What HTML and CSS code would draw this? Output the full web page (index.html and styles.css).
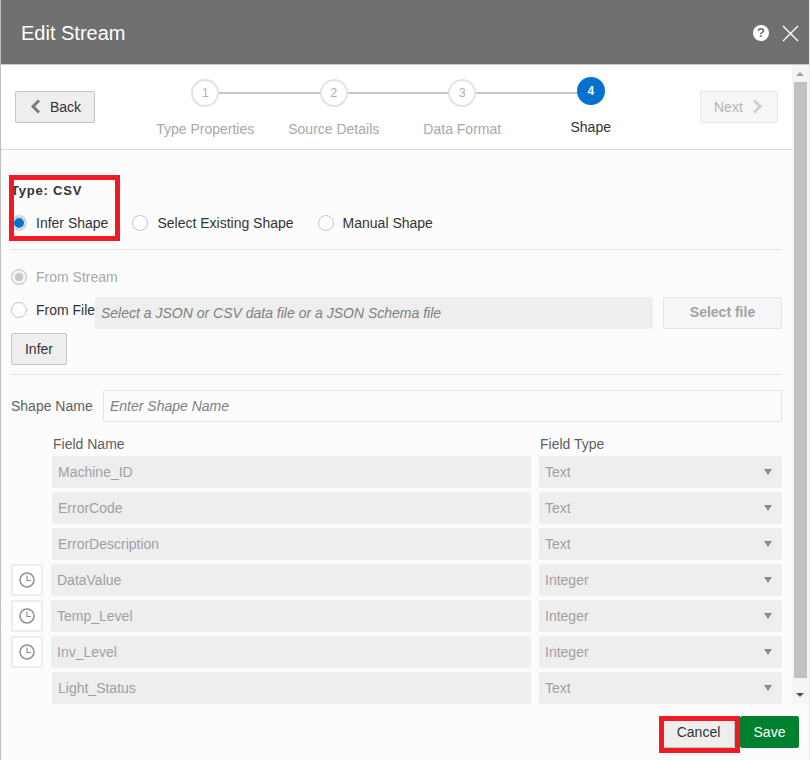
FILE: index.html
```html
<!DOCTYPE html>
<html lang="en">
<head>
  <meta charset="UTF-8">
  <meta name="viewport" content="width=device-width, initial-scale=1.0">
  <title>Edit Stream</title>
  <link rel="stylesheet" href="styles.css">
</head>
<body>
  <div class="dialog">
    <header class="dialog-head">
      <h1 class="dialog-title">Edit Stream</h1>
      <span class="help-icon">?</span>
      <svg class="close-icon" width="17" height="17" viewBox="0 0 17 17"><path d="M1 1 L16 16 M16 1 L1 16" fill="none" stroke="#fff" stroke-width="1.4"/></svg>
    </header>

    <div class="dialog-body">
      <div class="pane">
        <div class="train-bar">
          <button class="btn btn-back" type="button">
            <svg class="chevron" width="11" height="15" viewBox="0 0 11 15"><path d="M9 1.5 L3 7.5 L9 13.5" fill="none" stroke="#7d7d7d" stroke-width="3"/></svg>
            Back
          </button>
          <ol class="train">
            <li class="step"><span class="step-num">1</span><span class="step-label">Type Properties</span></li>
            <li class="step"><span class="step-num">2</span><span class="step-label">Source Details</span></li>
            <li class="step"><span class="step-num">3</span><span class="step-label">Data Format</span></li>
            <li class="step step-active"><span class="step-num">4</span><span class="step-label">Shape</span></li>
          </ol>
          <button class="btn btn-next" type="button">
            Next
            <svg class="chevron" width="11" height="15" viewBox="0 0 11 15"><path d="M2 1.5 L8 7.5 L2 13.5" fill="none" stroke="#cfcfcf" stroke-width="3"/></svg>
          </button>
        </div>

        <div class="content">
          <div class="type-line">Type: CSV</div>
          <div class="radio-row">
            <label class="radio-item"><span class="radio radio-on"></span>Infer Shape</label>
            <label class="radio-item"><span class="radio"></span>Select Existing Shape</label>
            <label class="radio-item"><span class="radio"></span>Manual Shape</label>
          </div>
          <hr class="divider divider-first">

          <label class="radio-item from-stream"><span class="radio radio-disabled"></span>From Stream</label>
          <div class="file-row">
            <label class="radio-item from-file"><span class="radio"></span>From File</label>
            <input class="file-input" type="text" disabled placeholder="Select a JSON or CSV data file or a JSON Schema file">
            <button class="btn btn-select" type="button">Select file</button>
          </div>
          <button class="btn btn-infer" type="button">Infer</button>
          <hr class="divider divider-second">

          <div class="shape-name">
            <label for="shapeName">Shape Name</label>
            <input id="shapeName" type="text" placeholder="Enter Shape Name">
          </div>

          <div class="field-head">
            <span class="field-head-name">Field Name</span>
            <span class="field-head-type">Field Type</span>
          </div>

          <div class="field-row no-time">
            <input class="field-input" type="text" disabled value="Machine_ID">
            <div class="field-select">Text<span class="caret"></span></div>
          </div>
          <div class="field-row no-time">
            <input class="field-input" type="text" disabled value="ErrorCode">
            <div class="field-select">Text<span class="caret"></span></div>
          </div>
          <div class="field-row no-time">
            <input class="field-input" type="text" disabled value="ErrorDescription">
            <div class="field-select">Text<span class="caret"></span></div>
          </div>
          <div class="field-row">
            <span class="time-btn"><svg width="16" height="16" viewBox="0 0 16 16"><circle cx="8" cy="8" r="7" fill="none" stroke="#8b8f91" stroke-width="1.5"/><path d="M8 3.5 V8.5 H12" fill="none" stroke="#8b8f91" stroke-width="1.2"/></svg></span>
            <input class="field-input" type="text" disabled value="DataValue">
            <div class="field-select">Integer<span class="caret"></span></div>
          </div>
          <div class="field-row">
            <span class="time-btn"><svg width="16" height="16" viewBox="0 0 16 16"><circle cx="8" cy="8" r="7" fill="none" stroke="#8b8f91" stroke-width="1.5"/><path d="M8 3.5 V8.5 H12" fill="none" stroke="#8b8f91" stroke-width="1.2"/></svg></span>
            <input class="field-input" type="text" disabled value="Temp_Level">
            <div class="field-select">Integer<span class="caret"></span></div>
          </div>
          <div class="field-row">
            <span class="time-btn"><svg width="16" height="16" viewBox="0 0 16 16"><circle cx="8" cy="8" r="7" fill="none" stroke="#8b8f91" stroke-width="1.5"/><path d="M8 3.5 V8.5 H12" fill="none" stroke="#8b8f91" stroke-width="1.2"/></svg></span>
            <input class="field-input" type="text" disabled value="Inv_Level">
            <div class="field-select">Integer<span class="caret"></span></div>
          </div>
          <div class="field-row no-time">
            <input class="field-input" type="text" disabled value="Light_Status">
            <div class="field-select">Text<span class="caret"></span></div>
          </div>
        </div>
      </div>

      <div class="scrollbar">
        <span class="arrow-up"></span>
        <span class="thumb"></span>
        <span class="arrow-down"></span>
      </div>
    </div>

    <footer class="dialog-foot">
      <button class="btn btn-cancel" type="button">Cancel</button>
      <button class="btn btn-save" type="button">Save</button>
    </footer>

    <!-- red annotation boxes drawn over the screenshot -->
    <div class="callout callout-type"></div>
    <div class="callout callout-cancel"></div>
  </div>
</body>
</html>
```

FILE: styles.css
```css
* {
  box-sizing: border-box;
}

body {
  margin: 0;
  background-color: #fff;
  font-family: "Liberation Sans", Arial, sans-serif;
  font-size: 14px;
  color: #333;
}

.dialog {
  position: relative;
  display: flex;
  flex-direction: column;
  width: 810px;
  height: 760px;
  overflow: hidden;
  border-left: 1px solid #bdbdbd;
  border-right: 1px solid #e8e8e8;
  background-color: #fcfcfc;
}

.dialog-head {
  display: flex;
  align-items: center;
  height: 65px;
  flex-shrink: 0;
  padding: 2px 10px 0 20px;
  background-color: #707070;
  border-bottom: 1px solid #c8c8c8;
  color: #fff;
}

.dialog-title {
  margin: 0;
  flex: 1;
  font-size: 20px;
  font-weight: 400;
}

.help-icon {
  width: 16px;
  height: 16px;
  margin-right: 13px;
  border-radius: 50%;
  background-color: #fff;
  color: #707070;
  font-size: 13px;
  font-weight: 700;
  line-height: 16px;
  text-align: center;
}

.dialog-body {
  display: flex;
  height: 639px;
  flex-shrink: 0;
}

.pane {
  width: 791px;
}

/* step train */
.train-bar {
  display: flex;
  height: 85px;
  padding: 26px 14px 0;
  background-color: #fff;
  border-bottom: 1px solid #d6dfe6;
}

.btn {
  height: 32px;
  padding: 0;
  border: 1px solid #c4c4c4;
  border-radius: 2px;
  background-color: #eee;
  font-family: inherit;
  font-size: 14px;
  color: #333;
}

.chevron {
  margin-bottom: 2px;
}

.btn-back {
  display: flex;
  align-items: center;
  width: 80px;
  padding-left: 14px;
  gap: 9px;
}

.btn-next {
  display: flex;
  align-items: center;
  width: 78px;
  margin-left: 45px;
  padding-left: 13px;
  gap: 9px;
  background-color: #f6f6f6;
  border-color: #e6e6e6;
  color: #b4b4b4;
}

.train {
  display: flex;
  width: 514px;
  margin: -12px 0 0 46px;
  padding: 0;
  list-style: none;
}

.step {
  position: relative;
  display: flex;
  flex-direction: column;
  align-items: center;
  width: 128.5px;
}

.step + .step::before {
  content: "";
  position: absolute;
  top: 13px;
  left: -50%;
  width: 100%;
  height: 2px;
  background-color: #c6c6c6;
}

.step-num {
  position: relative;
  z-index: 1;
  width: 28px;
  height: 28px;
  border: 2px solid #e3e3e3;
  border-radius: 50%;
  background-color: #fff;
  color: #b0b0b0;
  font-size: 12px;
  line-height: 24px;
  text-align: center;
}

.step-label {
  margin-top: 14px;
  color: #a8a8a8;
  white-space: nowrap;
}

.step-active .step-num {
  margin-top: -2px;
  border-color: #0572ce;
  background-color: #0572ce;
  color: #fff;
  font-weight: 700;
}

.step-active .step-label {
  color: #333;
}

/* form */
.content {
  padding: 33px 10px 0;
}

.type-line {
  height: 16px;
  font-size: 13px;
  font-weight: 700;
  line-height: 16px;
  letter-spacing: 0.8px;
}

.radio-row {
  display: flex;
  gap: 24px;
  margin-top: 14px;
}

.radio-item {
  display: flex;
  align-items: center;
  gap: 9px;
  height: 20px;
  white-space: nowrap;
}

.radio {
  width: 16px;
  height: 16px;
  flex-shrink: 0;
  border: 1px solid #c6c6c6;
  border-radius: 50%;
  background-color: #fff;
}

.radio-on {
  border: 2px solid #d6d6d6;
  background-color: #0572ce;
  box-shadow: inset 0 0 0 1px #fff;
}

.radio-disabled {
  border: 1px solid #c6c6c6;
  background-color: #c6c6c6;
  box-shadow: inset 0 0 0 3px #f4f4f4;
}

.divider {
  height: 1px;
  margin: 0;
  border: 0;
  background-color: #e4e4e4;
}

.divider-first {
  margin-top: 16px;
}

.divider-second {
  margin-top: 9px;
}

.from-stream {
  margin-top: 17px;
  color: #a8a8a8;
}

.file-row {
  display: flex;
  height: 32px;
  margin-top: 10px;
}

.from-file {
  width: 84px;
  height: 26px;
  flex-shrink: 0;
  color: #333;
}

.file-input {
  width: 558px;
  height: 32px;
  padding: 0 6px;
  border: 0;
  border-radius: 2px;
  background-color: #eee;
  font-family: inherit;
  font-size: 14px;
}

.file-input::placeholder,
#shapeName::placeholder {
  color: #7f7f7f;
  font-style: italic;
  opacity: 1;
}

.btn-select {
  width: 119px;
  margin-left: 10px;
  padding-bottom: 2px;
  border-color: #e0e5ea;
  background-color: #f5f6f8;
  color: #a3a3a3;
  font-weight: 700;
}

.btn-infer {
  display: block;
  width: 56px;
  margin-top: 4px;
}

.shape-name {
  display: flex;
  align-items: center;
  height: 32px;
  margin-top: 15px;
}

.shape-name label {
  width: 92px;
  color: #5f5f5f;
}

#shapeName {
  flex: 1;
  height: 32px;
  padding: 0 6px;
  border: 1px solid #e4e4e4;
  border-radius: 2px;
  background-color: #fcfcfc;
  font-family: inherit;
  font-size: 14px;
}

.field-head {
  display: flex;
  height: 14px;
  margin-top: 15px;
  margin-bottom: 5px;
  padding-left: 42px;
  color: #5f5f5f;
  line-height: 14px;
}

.field-head-name {
  width: 487px;
}

.field-row {
  display: flex;
  gap: 8px;
  height: 32px;
  margin-bottom: 4px;
}

.no-time {
  padding-left: 41px;
}

.time-btn {
  display: flex;
  align-items: center;
  justify-content: center;
  width: 32px;
  flex-shrink: 0;
  border: 2px solid #e9efee;
  background-color: #fff;
}

.field-input {
  flex: 1;
  min-width: 0;
  padding: 0 6px;
  border: 0;
  border-radius: 2px;
  background-color: #eee;
  color: #a0a0a0;
  font-family: inherit;
  font-size: 14px;
}

.field-select {
  display: flex;
  align-items: center;
  justify-content: space-between;
  width: 243px;
  flex-shrink: 0;
  padding: 0 10px 0 6px;
  border-radius: 2px;
  background-color: #eee;
  color: #a0a0a0;
}

.caret {
  width: 0;
  height: 0;
  border-top: 6px solid #8a8a8a;
  border-left: 4.5px solid transparent;
  border-right: 4.5px solid transparent;
}

/* scrollbar */
.scrollbar {
  position: relative;
  width: 17px;
  background-color: #f5f5f5;
}

.thumb {
  display: block;
  width: 13px;
  height: 596px;
  margin: 17px 0 0 2px;
  background-color: #c1c1c1;
}

.arrow-up,
.arrow-down {
  position: absolute;
  left: 4px;
  width: 0;
  height: 0;
  border-left: 4px solid transparent;
  border-right: 4px solid transparent;
}

.arrow-up {
  top: 7px;
  border-bottom: 4px solid #a8a8a8;
}

.arrow-down {
  bottom: 7px;
  border-top: 4px solid #505050;
}

/* footer */
.dialog-foot {
  display: flex;
  justify-content: flex-end;
  padding: 12px 10px 0 0;
}

.btn-cancel {
  width: 73px;
  margin-right: 5px;
  border-color: #c4c4c4;
}

.btn-save {
  width: 59px;
  border-color: #00812f;
  background-color: #00812f;
  color: #fff;
}

.callout {
  position: absolute;
  border: 5px solid #ed1c24;
}

.callout-type {
  top: 175px;
  left: 8px;
  width: 111px;
  height: 66px;
}

.callout-cancel {
  top: 716px;
  left: 658px;
  width: 81px;
  height: 37px;
}
```
